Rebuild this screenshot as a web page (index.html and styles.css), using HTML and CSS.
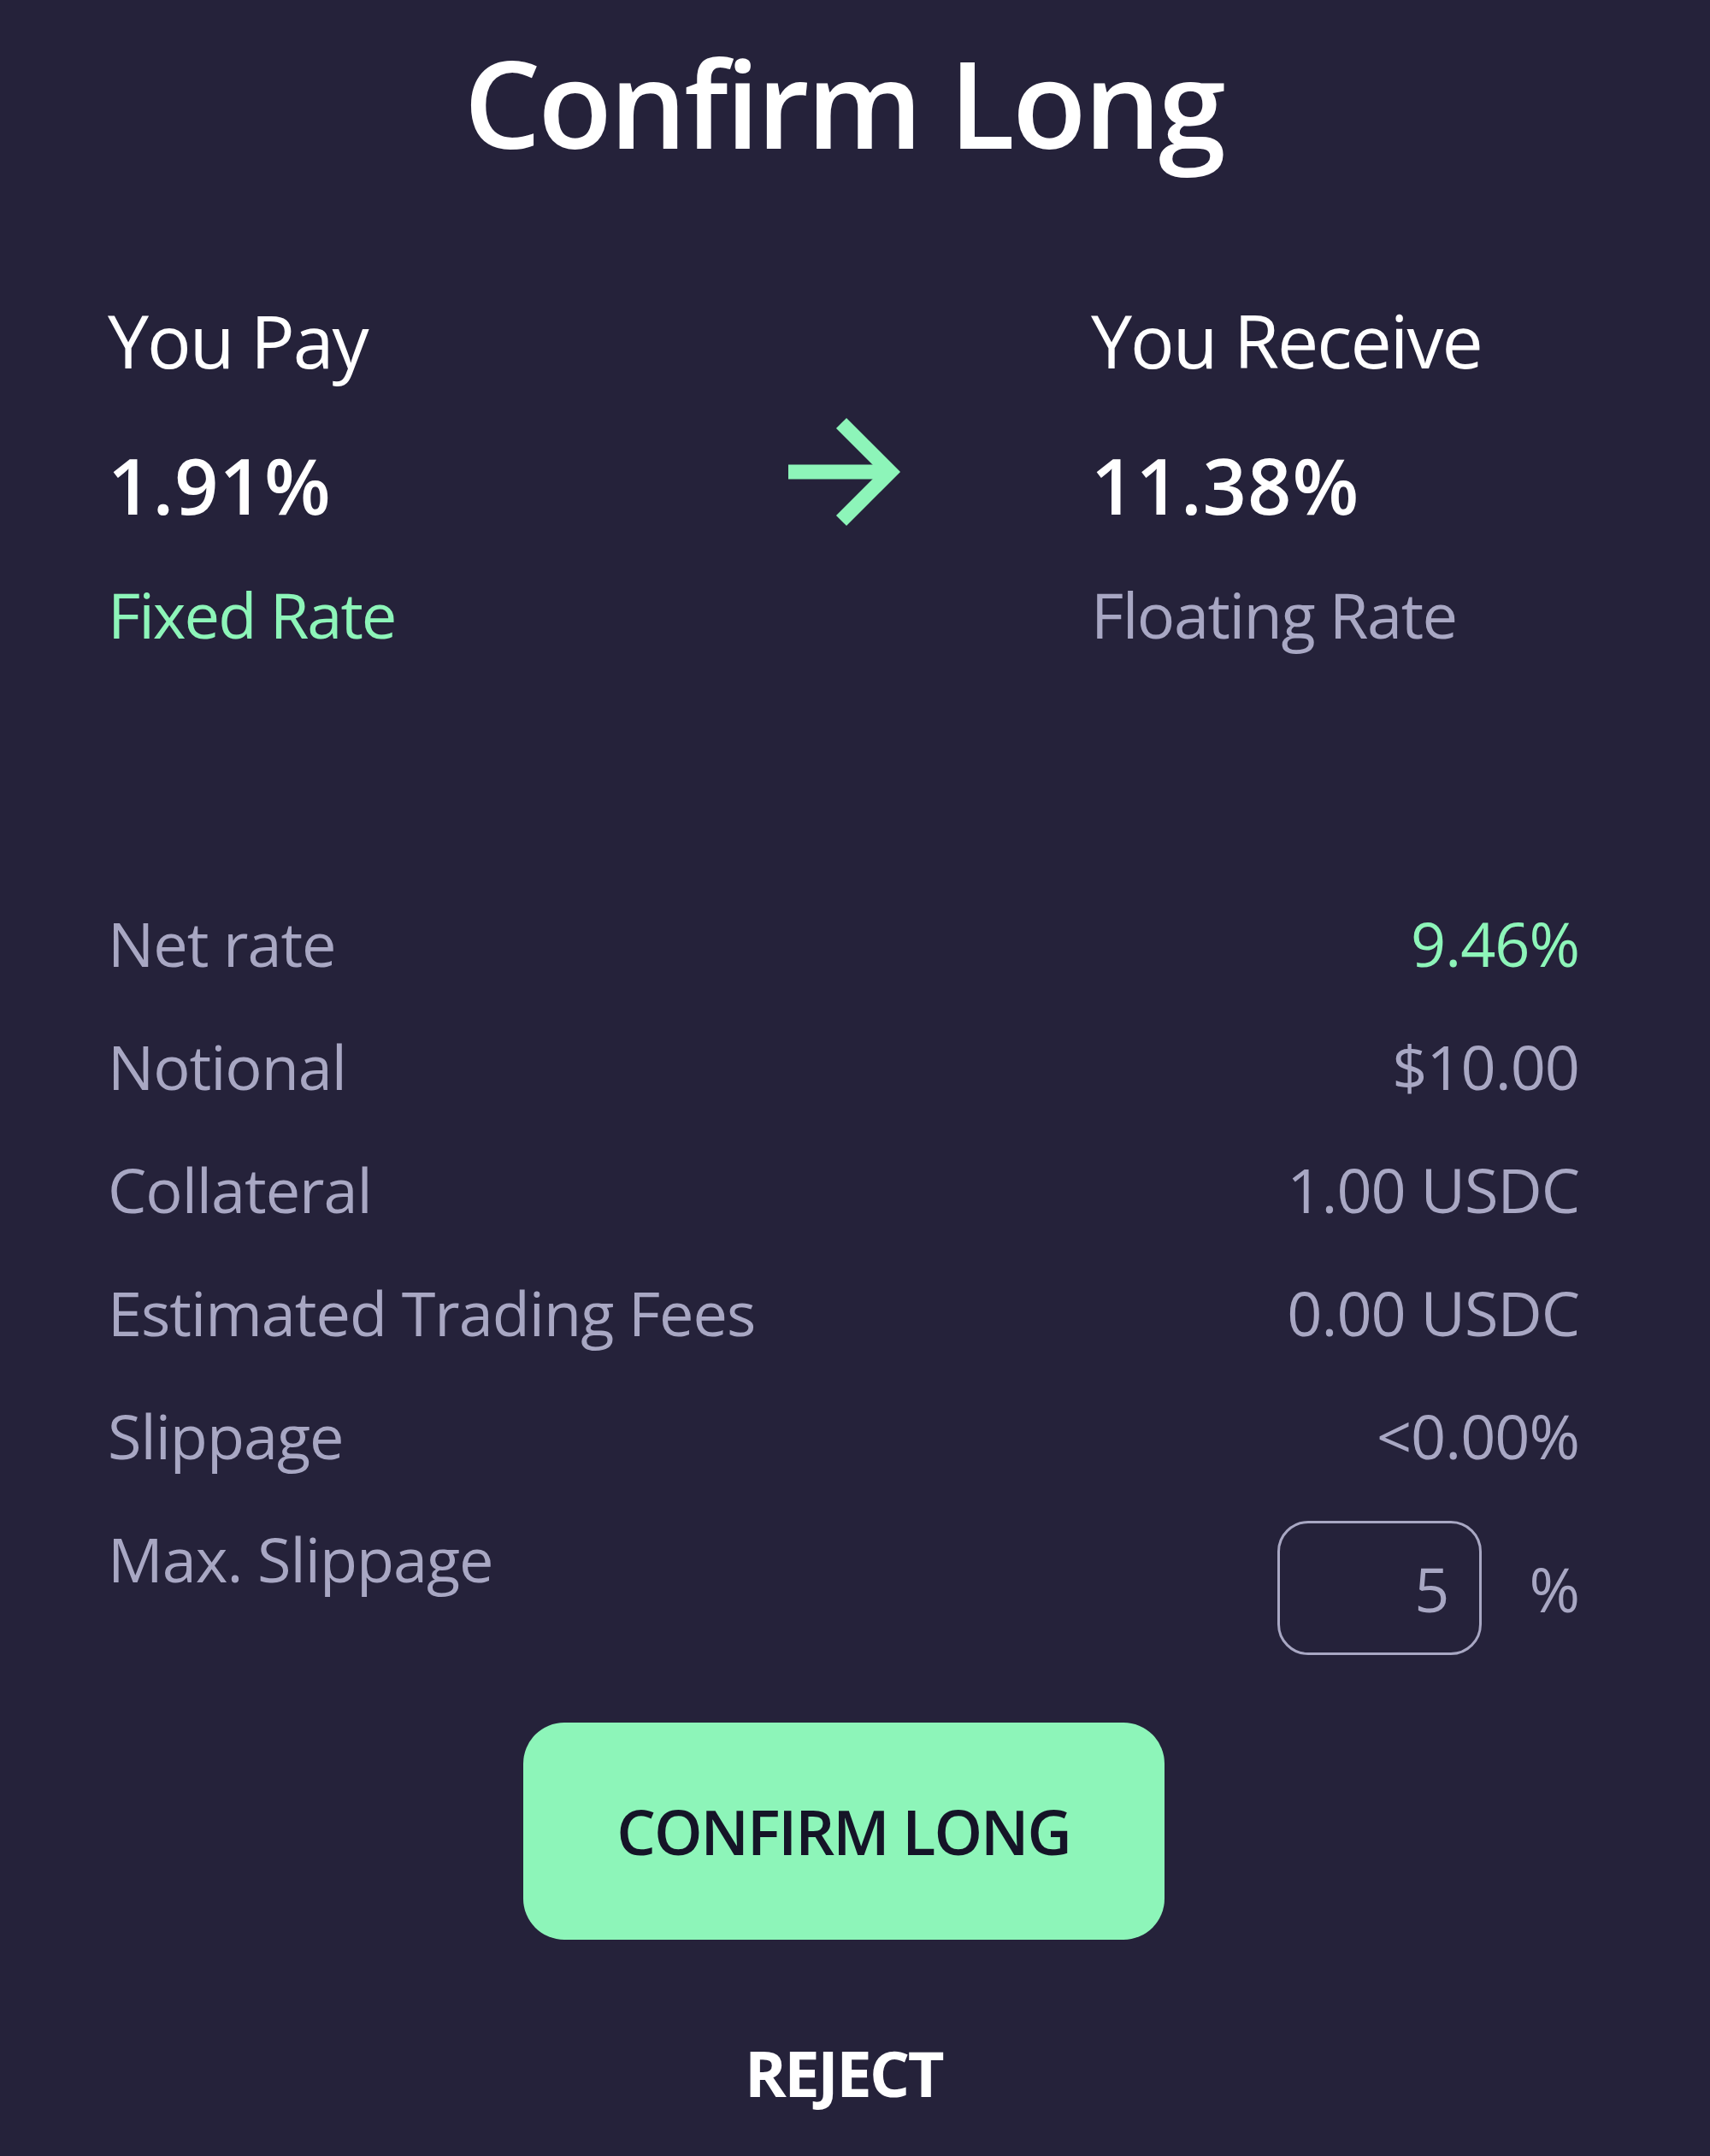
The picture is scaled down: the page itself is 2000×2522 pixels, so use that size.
FILE: index.html
```html
<!DOCTYPE html>
<html lang="en">
<head>
  <meta charset="UTF-8">
  <title>Confirm Long</title>
  <link rel="stylesheet" href="styles.css">
</head>
<body>

  <main class="modal">
    <h1 class="title">Confirm Long</h1>

    <!-- Pay / Receive -->
    <section class="swap">
      <div class="side">
        <div class="side-label">You Pay</div>
        <div class="side-rate">1.91%</div>
        <div class="side-type fixed">Fixed Rate</div>
      </div>

      <svg class="swap-arrow" width="140" height="130" viewBox="0 0 140 130">
        <path d="M4 65H120" />
        <path d="M66 8L123 65L66 122" />
      </svg>

      <div class="side side-right">
        <div class="side-label">You Receive</div>
        <div class="side-rate">11.38%</div>
        <div class="side-type">Floating Rate</div>
      </div>
    </section>

    <!-- Trade details -->
    <dl class="details">
      <div class="detail-row">
        <dt>Net rate</dt>
        <dd class="positive">9.46%</dd>
      </div>
      <div class="detail-row">
        <dt>Notional</dt>
        <dd>$10.00</dd>
      </div>
      <div class="detail-row">
        <dt>Collateral</dt>
        <dd>1.00 USDC</dd>
      </div>
      <div class="detail-row">
        <dt>Estimated Trading Fees</dt>
        <dd>0.00 USDC</dd>
      </div>
      <div class="detail-row">
        <dt>Slippage</dt>
        <dd>&lt;0.00%</dd>
      </div>
      <div class="detail-row">
        <dt>Max. Slippage</dt>
        <dd class="slippage">
          <input class="slippage-input" type="text" value="5">
          <span>%</span>
        </dd>
      </div>
    </dl>

    <div class="actions">
      <button type="button" class="confirm-btn">CONFIRM LONG</button>
      <button type="button" class="reject-btn">REJECT</button>
    </div>
  </main>

</body>
</html>
```

FILE: styles.css
```css
body {
  margin: 0;
  background: #25223a;
  color: #ffffff;
  font-family: "Open Sans", "Noto Sans", sans-serif;
}

.modal {
  padding: 39px 153px 0 126px;
}

.title {
  margin: 0;
  text-align: center;
  font-size: 142px;
  line-height: 160px;
  font-weight: 600;
  letter-spacing: -3px;
}

/* Pay / Receive block */
.swap {
  display: grid;
  grid-template-columns: 792px 358px 1fr;
  margin-top: 149px;
}

.side-label {
  font-size: 86px;
  line-height: 100px;
  letter-spacing: -2px;
}

.side-rate {
  margin-top: 69px;
  font-size: 90px;
  line-height: 100px;
  font-weight: 600;
  letter-spacing: 1px;
}

.side-type {
  margin-top: 57px;
  font-size: 74px;
  line-height: 90px;
  letter-spacing: -1.5px;
  color: #a8a7c3;
}

.side-type.fixed {
  color: #8df5b9;
  letter-spacing: -2px;
}

.swap-arrow {
  margin-top: 139px;
  fill: none;
  stroke: #8df5b9;
  stroke-width: 17;
}

/* Details list */
.details {
  margin: 267px 0 0;
}

.detail-row {
  display: flex;
  justify-content: space-between;
  align-items: flex-start;
  font-size: 72px;
  line-height: 144px;
  letter-spacing: -1px;
  color: #a8a7c3;
}

.detail-row dt,
.detail-row dd {
  margin: 0;
}

.positive {
  color: #8df5b9;
}

.slippage {
  display: flex;
  align-items: center;
  gap: 55px;
  margin-top: 28px !important;
  line-height: 100px;
}

.slippage-input {
  width: 239px;
  height: 157px;
  box-sizing: border-box;
  padding: 0 35px 0 0;
  background: transparent;
  border: 3px solid #a8a7c3;
  border-radius: 36px;
  color: #a8a7c3;
  font-family: inherit;
  font-size: 72px;
  text-align: right;
  outline: none;
}

/* Buttons */
.actions {
  display: flex;
  flex-direction: column;
  align-items: center;
  margin-top: 79px;
}

.confirm-btn {
  width: 750px;
  height: 254px;
  background: #8df5b9;
  color: #151427;
  border: none;
  border-radius: 48px;
  font-family: inherit;
  font-size: 72px;
  font-weight: 600;
  letter-spacing: -2px;
  cursor: pointer;
}

.reject-btn {
  margin-top: 106px;
  padding: 0;
  background: none;
  border: none;
  color: #ffffff;
  font-family: inherit;
  font-size: 74px;
  line-height: 100px;
  font-weight: 700;
  letter-spacing: -2.5px;
  cursor: pointer;
}
```
